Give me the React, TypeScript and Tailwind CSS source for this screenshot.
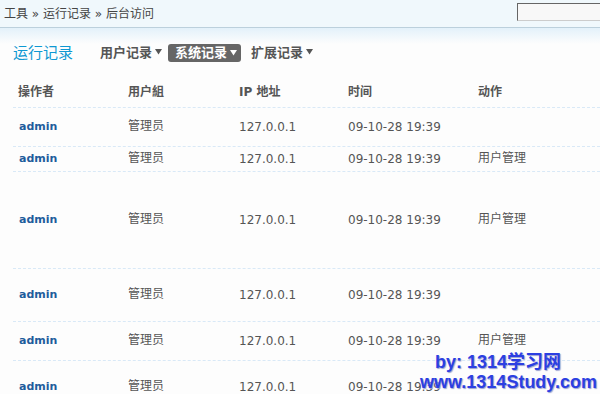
const rows = [
  { h: 'h-[39px]', action: '' },
  { h: 'h-[25px]', action: '用户管理' },
  { h: 'h-[97px]', action: '用户管理' },
  { h: 'h-[53px]', action: '' },
  { h: 'h-[39px]', action: '用户管理' },
  { h: 'h-[53px]', action: '' },
];

const font = "font-['DejaVu_Sans','Noto_Sans_CJK_SC',sans-serif]";

const Caret = ({ className }: { className: string }) => (
  <svg width="7" height="7" viewBox="0 0 7 7" className={className}>
    <path d="M0 1h7L3.5 6.5z" fill="currentColor" />
  </svg>
);

export default function App() {
  return (
    <div className={`relative w-[600px] h-[394px] overflow-hidden bg-[#fdfdfd] ${font}`}>
      {/* top bar */}
      <div className="h-[28px] bg-[#f0f8fc] border-b border-[#bcd0dc] flex items-center justify-between pl-[4px]">
        <span className="text-[12px] text-[#444]">工具 » 运行记录 » 后台访问</span>
        <input
          className="w-[90px] h-[18px] mb-[3px] -mr-[7px] bg-[#f8f8f8] border border-t-[#666] border-l-[#666] border-b-[#ccc] border-r-[#ccc] outline-none"
          readOnly
        />
      </div>

      <div className="bg-[linear-gradient(to_bottom,#e3f1fa,#fdfdfd_16px)] pt-[12px]">
        {/* title + tabs */}
        <div className="h-[26px] flex items-center pl-[13px]">
          <span className="text-[15px] text-[#0e98d2] w-[87px]">运行记录</span>
          <div className="flex items-center text-[13px] font-bold text-[#555]">
            <span className="flex items-center gap-[3px]">
              用户记录<Caret className="text-[#555] mb-[3px]" />
            </span>
            <span className="ml-[6px] flex items-center gap-[3px] bg-[#666] text-white rounded-[3px] pl-[7px] pr-[4px] h-[18px]">
              系统记录<Caret className="text-white mb-[2px]" />
            </span>
            <span className="ml-[10px] flex items-center gap-[3px]">
              扩展记录<Caret className="text-[#555] mb-[3px]" />
            </span>
          </div>
        </div>

        {/* table */}
        <div className="mt-[10px] ml-[13px]">
          <div className="h-[32px] flex items-center border-b border-dashed border-[#d9e9f7] text-[12px] font-bold text-[#555]">
            <span className="w-[115px] pl-[5px]">操作者</span>
            <span className="w-[111px]">用户組</span>
            <span className="w-[109px]">IP 地址</span>
            <span className="w-[130px]">时间</span>
            <span className="flex-1">动作</span>
          </div>
          {rows.map((r, i) => (
            <div
              key={i}
              className={`${r.h} flex items-center border-b border-dashed border-[#d9e9f7] text-[12px] text-[#555]`}
            >
              <span className="w-[115px] pl-[6px] text-[11px] font-bold text-[#1f5c9c]">admin</span>
              <span className="w-[111px] -mt-[3px]">管理员</span>
              <span className="w-[109px]">127.0.0.1</span>
              <span className="w-[130px]">09-10-28 19:39</span>
              <span className="flex-1 -mt-[3px]">{r.action}</span>
            </div>
          ))}
        </div>
      </div>

      {/* watermark */}
      <div className="absolute left-[420px] top-[352px] font-['Liberation_Sans','Noto_Sans_CJK_SC',sans-serif] font-bold text-[18px] leading-[20px] text-[#2c3fe2] [text-shadow:1px_1px_1px_#9aa0d0]">
        <div className="pl-[15px]">by: 1314学习网</div>
        <div>www.1314Study.com</div>
      </div>
    </div>
  );
}
